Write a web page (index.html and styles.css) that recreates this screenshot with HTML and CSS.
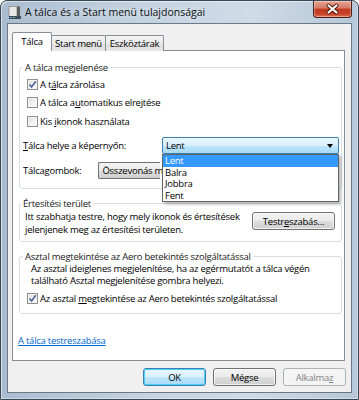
FILE: index.html
```html
<!DOCTYPE html>
<html>
<head>
	<meta charset="utf-8">
	<title>A tálca és a Start menü tulajdonságai</title>
<link rel="stylesheet" href="styles.css">
</head>
<body>

<div class="window">
	<div class="titlebar">
		<span class="app-icon">
			<svg width="14" height="13" viewBox="0 0 14 13">
				<rect x="1" y="0.5" width="8" height="10" fill="#e8e8e8" stroke="#9a9a9a"/>
				<rect x="9" y="0.5" width="3" height="10" fill="#5c5c5c"/>
				<rect x="1" y="10" width="12" height="3" fill="#3a4a5a"/>
				<rect x="2" y="11" width="2" height="1" fill="#57b4e8"/>
				<rect x="5" y="11" width="2" height="1" fill="#7cc45a"/>
			</svg>
		</span>
		<span class="title">A tálca és a Start menü tulajdonságai</span>
		<span class="close-btn">
			<svg width="39" height="17" viewBox="0 0 39 17">
				<path d="M15.5 4.5 L23.5 11.5 M23.5 4.5 L15.5 11.5" stroke="#4a1208" stroke-width="4" stroke-linecap="round"/>
				<path d="M15.5 4.5 L23.5 11.5 M23.5 4.5 L15.5 11.5" stroke="#ffffff" stroke-width="2.2" stroke-linecap="round"/>
			</svg>
		</span>
	</div>

	<div class="client">
		<div class="tabs">
			<div class="tab selected">Tálca</div>
			<div class="tab tab-start">Start menü</div>
			<div class="tab tab-tools">Eszköztárak</div>
		</div>

		<div class="panel">
			<fieldset class="group group-look">
				<legend>A tálca megjelenése</legend>
				<label class="check"><span class="box checked"><svg width="9" height="9" viewBox="0 0 9 9"><path d="M1.5 4.5 L3.6 7 L7.8 1.2" fill="none" stroke="#4b5f99" stroke-width="1.6"/></svg></span><span>A t<u>á</u>lca zárolása</span></label>
				<label class="check"><span class="box"></span><span>A tálca a<u>u</u>tomatikus elrejtése</span></label>
				<label class="check check-small"><span class="box"></span><span>Kis <u>i</u>konok használata</span></label>

				<div class="combo-row row-place">
					<span class="combo-label"><u>T</u>álca helye a képernyőn:</span>
					<div class="combo combo-open">Lent<span class="arrow"></span></div>
					<ul class="droplist">
						<li class="active">Lent</li>
						<li>Balra</li>
						<li>Jobbra</li>
						<li>Fent</li>
					</ul>
				</div>
				<div class="combo-row row-buttons">
					<span class="combo-label">Tálca<u>g</u>ombok:</span>
					<div class="combo combo-wide"><span class="combo-value">Összevonás m</span></div>
				</div>
			</fieldset>

			<fieldset class="group group-notify">
				<legend>Értesítési terület</legend>
				<div class="notify-row">
					<p class="notify-text">Itt szabhatja testre, hogy mely ikonok és értesítések<br>jelenjenek meg az értesítési területen.</p>
					<span class="btn btn-custom">Testr<u>e</u>szabás...</span>
				</div>
			</fieldset>

			<fieldset class="group group-aero">
				<legend>Asztal megtekintése az Aero betekintés szolgáltatással</legend>
				<p class="aero-text">Az asztal ideiglenes megjelenítése, ha az egérmutatót a tálca végén<br>található Asztal megjelenítése gombra helyezi.</p>
				<label class="check check-aero"><span class="box checked"><svg width="9" height="9" viewBox="0 0 9 9"><path d="M1.5 4.5 L3.6 7 L7.8 1.2" fill="none" stroke="#4b5f99" stroke-width="1.6"/></svg></span><span>Az asztal <u>m</u>egtekintése az Aero betekintés szolgáltatással</span></label>
			</fieldset>

			<a class="help-link" href="#">A tálca testreszabása</a>
		</div>

		<div class="buttons">
			<span class="btn btn-default">OK</span>
			<span class="btn">Mégse</span>
			<span class="btn btn-disabled"><span>Alkalma<u>z</u></span></span>
		</div>
	</div>
</div>

</body>
</html>
```

FILE: styles.css
```css
body{
	margin: 0;
	width: 359px;
	height: 400px;
	overflow: hidden;
	font-family: "Open Sans", "Noto Sans", sans-serif;
	font-size: 9.5px;
	letter-spacing: -0.25px;
	color: #000;
	background-color: #fff;
}

u{
	text-decoration: underline;
	text-underline-offset: 1px;
}

.window{
	height: 400px;
	box-sizing: border-box;
	border: 1px solid #3b4653;
	border-radius: 7px 7px 0 0;
	background: linear-gradient(to right, #a9bccf 0, #c3d3e2 40%, #cfdbe7 70%, #b5c7d8 100%);
	padding: 0 6px 6px 6px;
	display: flex;
	flex-direction: column;
	box-shadow: inset 1px 1px 0 rgba(255,255,255,0.55), inset -1px -1px 0 rgba(255,255,255,0.4);
}

/* title bar */
.titlebar{
	height: 22px;
	display: flex;
	align-items: center;
	flex: none;
}
.app-icon{
	width: 14px;
	height: 13px;
	margin-left: 1px;
	margin-top: 1px;
}
.app-icon svg{
	display: block;
}
.title{
	margin-left: 3px;
	font-size: 10.5px;
	letter-spacing: 0;
	color: #111;
	text-shadow: 0 0 6px rgba(255,255,255,0.9);
}
.close-btn{
	margin-left: auto;
	align-self: flex-start;
	width: 39px;
	height: 17px;
	box-sizing: border-box;
	border: 1px solid #4c1d18;
	border-top: 0;
	border-radius: 0 0 4px 4px;
	background: linear-gradient(to bottom, #e8a493 0, #d47966 45%, #c0391f 50%, #c6412a 80%, #e0734f 100%);
	box-shadow: inset 0 0 0 1px rgba(255,255,255,0.35);
}
.close-btn svg{
	display: block;
	margin-left: -1px;
}

/* client area */
.client{
	flex: 1;
	border: 1px solid #6b7885;
	background-color: #f0f0f0;
	display: flex;
	flex-direction: column;
	padding: 8px 6px 0 4px;
}

.tabs{
	display: flex;
	align-items: flex-end;
	height: 19px;
	flex: none;
	position: relative;
	z-index: 1;
}
.tab{
	height: 16px;
	box-sizing: border-box;
	border: 1px solid #898c95;
	border-bottom: 0;
	border-radius: 2px 2px 0 0;
	background: linear-gradient(to bottom, #f3f3f3 0, #ebebeb 50%, #dedede 51%, #e6e6e6 100%);
	display: flex;
	align-items: center;
	justify-content: center;
	margin-left: -1px;
}
.tab.selected{
	height: 19px;
	width: 40px;
	margin-left: 0;
	background: #fff;
	position: relative;
	z-index: 2;
	padding-bottom: 1px;
}
.tab-start{
	width: 55px;
}
.tab-tools{
	width: 59px;
}

.panel{
	height: 311px;
	flex: none;
	box-sizing: border-box;
	margin-top: -1px;
	border: 1px solid #898c95;
	background-color: #fff;
	padding: 0 2px 0 6px;
}

/* group boxes */
.group{
	margin: 0;
	border: 1px solid #d5dfe5;
	border-radius: 3px;
	min-width: 0;
}
.group legend{
	padding: 0 2px;
	margin-left: -4px;
	line-height: 13px;
	color: #1a1a1a;
}

.group-look{
	margin-top: 10px;
	padding: 1px 2px 9px 7px;
}
.group-notify{
	margin-top: 8px;
	padding: 0 5px 5px 5px;
}
.group-aero{
	margin-top: 8px;
	padding: 0 5px 6px 7px;
}

/* checkboxes */
.check{
	display: flex;
	align-items: center;
	height: 18px;
	white-space: nowrap;
}
.check-small{
	margin-top: 1px;
}
.box{
	width: 11px;
	height: 11px;
	flex: none;
	box-sizing: border-box;
	border: 1px solid #8f8f8f;
	background: linear-gradient(135deg, #dcdcdc 0, #f4f4f4 60%, #fdfdfd 100%);
	box-shadow: inset 0 0 0 1px #f4f4f4;
	margin-right: 2px;
	display: flex;
	align-items: center;
	justify-content: center;
}
.box svg{
	display: block;
}

/* combo boxes */
.combo-row{
	display: flex;
	align-items: center;
	height: 17px;
	margin-left: -4px;
	position: relative;
}
.row-place{
	margin-top: 7px;
	z-index: 3;
}
.row-buttons{
	margin-top: 8px;
}
.combo{
	height: 17px;
	box-sizing: border-box;
	border-radius: 2px;
	display: flex;
	align-items: center;
	padding-left: 3px;
	position: relative;
	white-space: nowrap;
}
.combo-open{
	margin-left: auto;
	width: 177px;
	border: 1px solid #3c7fb1;
	background: linear-gradient(to bottom, #eaf6fd 0, #d9f0fc 50%, #bee6fd 51%, #a7d9f5 100%);
}
/* the rest of this box lies under the open list */
.combo-wide{
	margin-left: 17px;
	width: 62px;
	border: 1px solid #707070;
	border-right: 0;
	border-radius: 2px 0 0 2px;
	background: linear-gradient(to bottom, #f2f2f2 0, #ebebeb 50%, #dddddd 51%, #cfcfcf 100%);
}
.arrow{
	position: absolute;
	right: 5px;
	top: 6px;
	border-left: 3.5px solid transparent;
	border-right: 3.5px solid transparent;
	border-top: 4px solid #000;
}
.droplist{
	position: absolute;
	top: 17px;
	right: 0;
	width: 177px;
	box-sizing: border-box;
	margin: 0;
	padding: 0;
	list-style: none;
	background-color: #fff;
	border: 1px solid #646464;
	box-shadow: 2px 2px 3px rgba(0,0,0,0.3);
}
.droplist li{
	height: 11.5px;
	line-height: 11.5px;
	padding-left: 2px;
}
.droplist li.active{
	background-color: #3399ff;
	color: #fff;
}

/* notify group */
.notify-row{
	display: flex;
	align-items: flex-start;
}
.notify-text{
	margin: 0;
	line-height: 13px;
	white-space: nowrap;
	flex: none;
}
.btn{
	height: 18px;
	box-sizing: border-box;
	border: 1px solid #707070;
	border-radius: 3px;
	background: linear-gradient(to bottom, #f2f2f2 0, #ebebeb 50%, #dddddd 51%, #cfcfcf 100%);
	box-shadow: inset 0 0 0 1px rgba(255,255,255,0.7);
	display: flex;
	align-items: center;
	justify-content: center;
	white-space: nowrap;
}
.btn-custom{
	width: 83px;
	flex: none;
	margin-left: auto;
	margin-top: 2px;
	margin-right: 1px;
}

/* aero group */
.aero-text{
	margin: 0 0 0 4px;
	line-height: 12px;
	white-space: nowrap;
}
.check-aero{
	margin-top: 2px;
}

.help-link{
	display: block;
	margin-top: 20px;
	margin-left: -1px;
	line-height: 13px;
	color: #0066cc;
	width: max-content;
}

/* dialog buttons */
.buttons{
	display: flex;
	justify-content: flex-end;
	margin-top: 7px;
	margin-right: -1px;
}
.buttons .btn{
	width: 63px;
	margin-left: 7px;
}
.btn-default{
	border-color: #3c7fb1;
	background: linear-gradient(to bottom, #eaf6fd 0, #d9f0fc 50%, #bee6fd 51%, #a7d9f5 100%);
	box-shadow: inset 0 0 0 1px #48d0f9;
}
.btn-disabled{
	border-color: #adb2b5;
	background: #f4f4f4;
	color: #838383;
	box-shadow: none;
}
```
